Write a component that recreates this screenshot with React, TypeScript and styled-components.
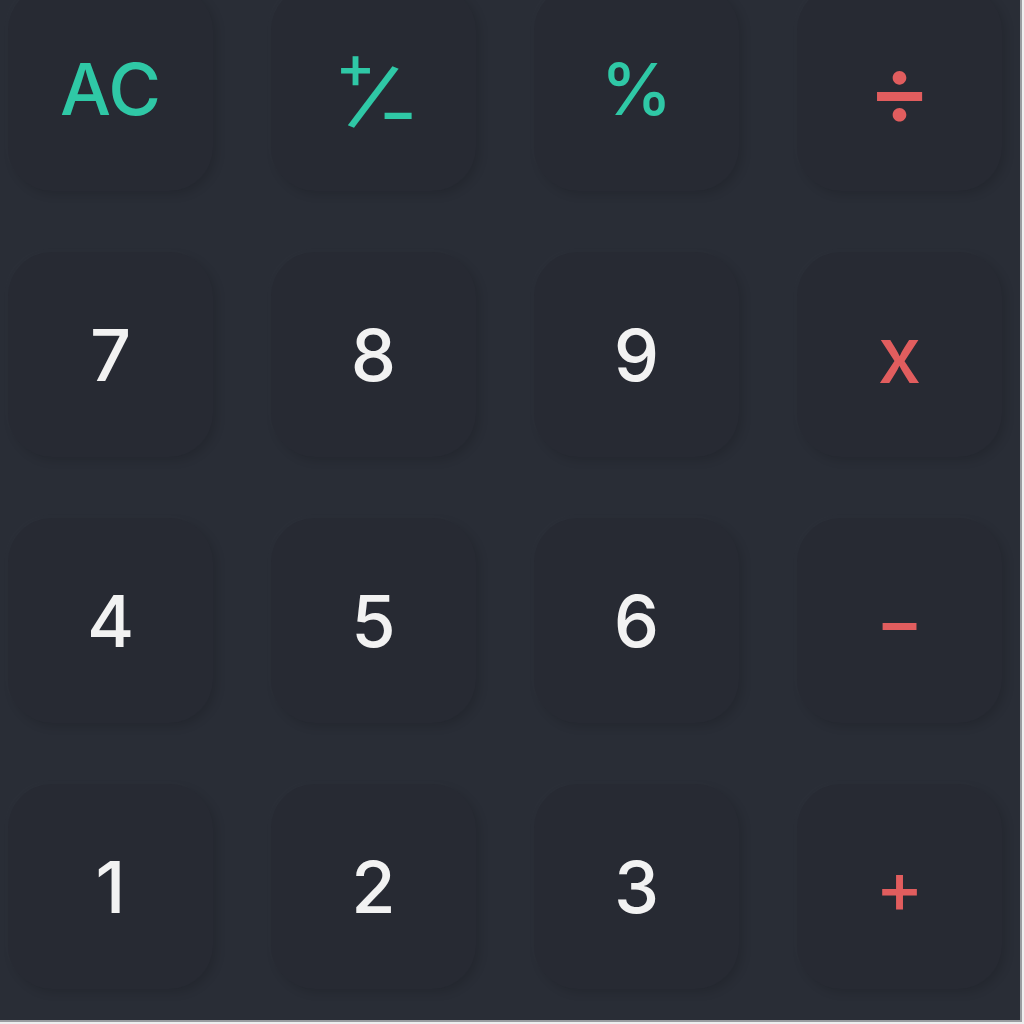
import React from 'react';
import styled, { createGlobalStyle } from 'styled-components';

const GlobalStyle = createGlobalStyle`
    html, body {
        margin: 0;
        padding: 0;
        background: #eeeeef;
    }
    * {
        box-sizing: border-box;
    }
`;

const Frame = styled.div`
    width: 1022px;
    height: 1022px;
    background: #292d36;
    border-right: 2px solid #9a9ca0;
    border-bottom: 2px solid #9a9ca0;
    overflow: hidden;
`;

const Keypad = styled.div`
    display: grid;
    grid-template-columns: repeat(4, 205px);
    grid-auto-rows: 205px;
    column-gap: 58px;
    row-gap: 61px;
    padding-left: 8px;
    margin-top: -14px;
`;

type Tone = 'num' | 'fn' | 'op';

const Key = styled.button<{ $tone: Tone; $size?: number }>`
    display: flex;
    align-items: center;
    justify-content: center;
    border: none;
    border-radius: 44px;
    background: #272a33;
    box-shadow: 4px 4px 10px rgba(0, 0, 0, 0.12), -3px -3px 8px rgba(255, 255, 255, 0.015);
    font-family: Inter, 'Noto Sans', sans-serif;
    font-size: ${(p) => p.$size ?? 72}px;
    font-weight: 500;
    line-height: 1;
    color: ${(p) => (p.$tone === 'num' ? '#f2f2f2' : p.$tone === 'fn' ? '#2fc8a6' : '#e15d5e')};
    padding: 0;
    cursor: pointer;
`;

// the "+/-" key: a raised plus, a long slanted slash and a lowered minus
const PlusMinus = styled.span`
    position: relative;
    display: block;
    width: 80px;
    height: 80px;
`;

const Part = styled.span<{ $x: number; $y: number; $size: number; $weight?: number; $tilt?: number }>`
    position: absolute;
    left: ${(p) => p.$x}px;
    top: ${(p) => p.$y}px;
    transform: translate(-50%, -50%) rotate(${(p) => p.$tilt ?? 0}deg);
    font-size: ${(p) => p.$size}px;
    font-weight: ${(p) => p.$weight ?? 500};
    line-height: 1;
`;

const keys: { label: React.ReactNode; tone: Tone; size?: number }[] = [
    { label: 'AC', tone: 'fn' },
    {
        label: (
            <PlusMinus>
                <Part $x={22} $y={17} $size={60}>+</Part>
                <Part $x={40.5} $y={46} $size={82} $weight={400} $tilt={22}>/</Part>
                <Part $x={64.5} $y={63} $size={56} $weight={600}>−</Part>
            </PlusMinus>
        ),
        tone: 'fn',
    },
    { label: '%', tone: 'fn' },
    { label: '÷', tone: 'op', size: 96 },
    { label: '7', tone: 'num' },
    { label: '8', tone: 'num' },
    { label: '9', tone: 'num' },
    { label: 'x', tone: 'op', size: 78 },
    { label: '4', tone: 'num' },
    { label: '5', tone: 'num' },
    { label: '6', tone: 'num' },
    { label: '−', tone: 'op' },
    { label: '1', tone: 'num' },
    { label: '2', tone: 'num' },
    { label: '3', tone: 'num' },
    { label: '+', tone: 'op' },
];

function App() {
    return (
        <>
            <GlobalStyle />
            <Frame>
                <Keypad>
                    {keys.map((k, i) => (
                        <Key key={i} $tone={k.tone} $size={k.size}>
                            {k.label}
                        </Key>
                    ))}
                </Keypad>
            </Frame>
        </>
    );
}

export default App;
